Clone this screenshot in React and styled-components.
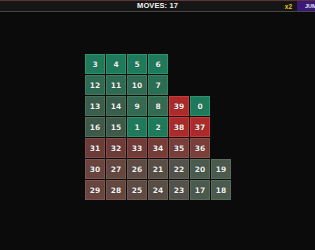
import styled, { createGlobalStyle } from "styled-components";

const GlobalStyle = createGlobalStyle`
  html, body {
    margin: 0;
    padding: 0;
    background: #0b0b0b;
    font-family: "DejaVu Sans", "Liberation Sans", sans-serif;
  }
`;

// each row: [number, fill, border]
const rows = [
  [[3, "#1f7a5c", "#2c9270"], [4, "#1f7a5c", "#2c9270"], [5, "#1f7a5c", "#2c9270"], [6, "#1f7a5c", "#2c9270"]],
  [[12, "#2f6a52", "#3c7d63"], [11, "#2f6a52", "#3c7d63"], [10, "#2f6a52", "#3c7d63"], [7, "#2a6e54", "#378266"]],
  [[13, "#3a5e4c", "#4a705d"], [14, "#3a5e4c", "#4a705d"], [9, "#346a52", "#437c63"], [8, "#346a52", "#437c63"], [39, "#ad2a2a", "#c83c3c"], [0, "#1f7a5c", "#2c9270"]],
  [[16, "#3e5b4a", "#4e6d5b"], [15, "#3e5b4a", "#4e6d5b"], [1, "#1f7a5c", "#2c9270"], [2, "#1f7a5c", "#2c9270"], [38, "#ad2a2a", "#c83c3c"], [37, "#ad2a2a", "#c83c3c"]],
  [[31, "#6c3c38", "#7e4d48"], [32, "#6e3c38", "#804d48"], [33, "#723b37", "#844c47"], [34, "#753c38", "#884d49"], [35, "#783f3a", "#8a504a"], [36, "#7a3f3a", "#8c504a"]],
  [[30, "#6a4540", "#7c5650"], [27, "#64473f", "#76584f"], [26, "#5e4b44", "#705c55"], [21, "#584e46", "#6a5f57"], [22, "#52524a", "#64635b"], [20, "#4a5a4c", "#5b6b5d"], [19, "#4a5a4c", "#5b6b5d"]],
  [[29, "#6a4540", "#7c5650"], [28, "#64473f", "#76584f"], [25, "#5e4b44", "#705c55"], [24, "#584e46", "#6a5f57"], [23, "#52524a", "#64635b"], [17, "#4a5a4c", "#5b6b5d"], [18, "#4a5a4c", "#5b6b5d"]],
];

const App = () => {
  return (
    <>
      <GlobalStyle />
      <Screen>
        <TopBar>
          <Moves>MOVES: 17</Moves>
          <Right>
            <Multiplier>x2</Multiplier>
            <JumpButton>JUMP</JumpButton>
          </Right>
        </TopBar>
        <Board>
          <Grid>
            {rows.map((row, r) =>
              row.map(([n, fill, border], c) => (
                <Tile
                  key={n}
                  $fill={fill}
                  $border={border}
                  style={{ gridRow: r + 1, gridColumn: c + 1 }}
                >
                  {n}
                </Tile>
              ))
            )}
          </Grid>
        </Board>
      </Screen>
    </>
  );
};

export default App;

const Screen = styled.div`
  width: 315px;
  height: 250px;
  display: flex;
  flex-direction: column;
  overflow: hidden;
  background: #0b0b0b;
`;

const TopBar = styled.div`
  position: relative;
  height: 10px;
  flex-shrink: 0;
  display: flex;
  align-items: center;
  justify-content: center;
  background: #161616;
  border-top: 1px solid #5e3434;
  border-bottom: 1px solid #464646;
`;

const Moves = styled.div`
  color: #f2f2f2;
  font-family: "Liberation Sans", sans-serif;
  font-weight: bold;
  font-size: 7.5px;
  line-height: 10px;
  letter-spacing: 0.1px;
`;

const Right = styled.div`
  position: absolute;
  right: -14px;
  top: 0;
  height: 10px;
  display: flex;
  align-items: center;
`;

const Multiplier = styled.span`
  color: #e8c81e;
  font-family: "Liberation Sans", sans-serif;
  font-weight: bold;
  font-size: 6.5px;
  margin-right: 5px;
`;

const JumpButton = styled.span`
  width: 32px;
  height: 10px;
  box-sizing: border-box;
  background: #3c1878;
  color: #e8e4f4;
  font-family: "Liberation Sans", sans-serif;
  font-weight: bold;
  font-size: 5.5px;
  line-height: 10px;
  padding-left: 8px;
  overflow: hidden;
  white-space: nowrap;
`;

const Board = styled.div`
  flex: 1;
  display: flex;
  justify-content: center;
  padding-top: 42px;
  padding-left: 1px;
`;

const Grid = styled.div`
  display: grid;
  grid-template-columns: repeat(7, 20px);
  grid-template-rows: repeat(7, 20px);
  gap: 1px;
  align-self: flex-start;
`;

const Tile = styled.div`
  box-sizing: border-box;
  width: 20px;
  height: 20px;
  display: flex;
  align-items: center;
  justify-content: center;
  background: ${(p) => p.$fill};
  border: 1px solid ${(p) => p.$border};
  color: #f4f4f4;
  font-size: 7.5px;
  font-weight: bold;
  text-shadow: 0 0 1px rgba(0, 0, 0, 0.6);
`;
